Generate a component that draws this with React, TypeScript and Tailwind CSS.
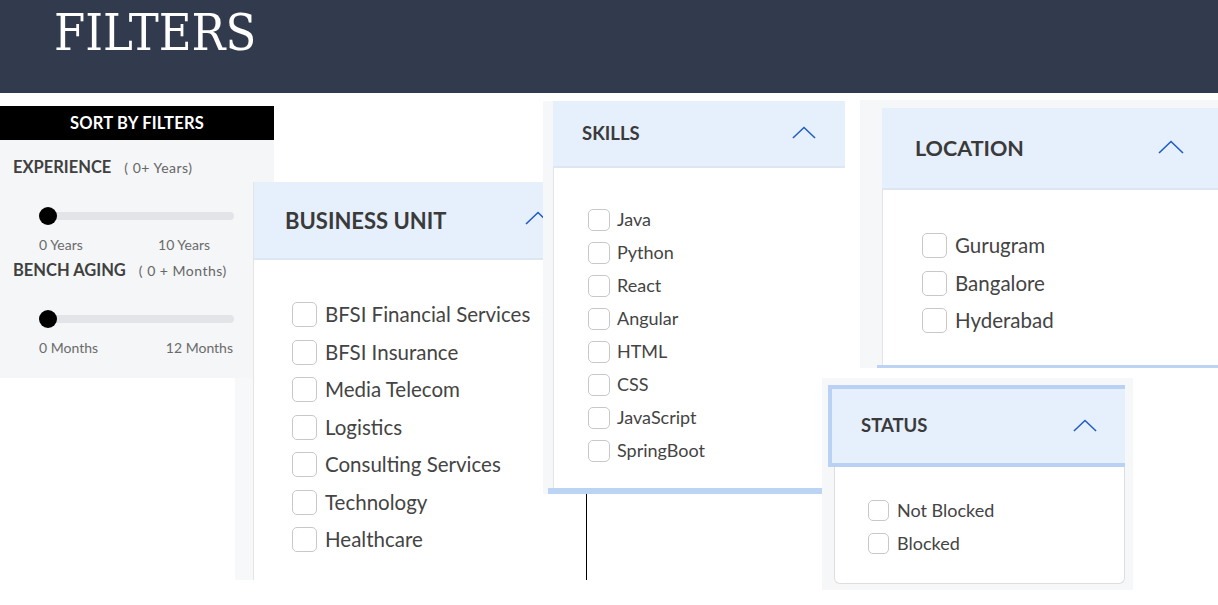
import React from "react";

const font = { fontFamily: "Lato, 'Noto Sans', sans-serif" };

const Chevron = ({ className = "" }: { className?: string }) => (
  <svg viewBox="0 0 26 14" className={className} fill="none">
    <polyline points="1,13 13,1.5 25,13" stroke="#1f5cc4" strokeWidth="1.6" />
  </svg>
);

const Box = ({ size }: { size: string }) => (
  <span className={`${size} shrink-0 rounded-[5px] border border-[#c8c8c8] bg-white`} />
);

interface ListProps {
  items: string[];
  box: string;
  text: string;
  row: string;
  gap: string;
}

const CheckList: React.FC<ListProps> = ({ items, box, text, row, gap }) => (
  <div className="flex flex-col">
    {items.map((it) => (
      <label key={it} className={`flex items-center ${gap} ${row}`}>
        <Box size={box} />
        <span className={`${text} text-[#444444]`}>{it}</span>
      </label>
    ))}
  </div>
);

const Slider = ({ left, right, pr }: { left: string; right: string; pr: string }) => (
  <div className="flex flex-col pl-[39px]">
    <div className="relative h-[18px] mr-[40px] flex items-center">
      <div className="ml-[9px] h-[8px] w-full rounded-full bg-[#e3e4e8]" />
      <div className="absolute left-0 top-0 h-[18px] w-[18px] rounded-full bg-black" />
    </div>
    <div className={`flex justify-between mt-[13px] ${pr} text-[14px] text-[#6b6b6b] leading-none`}>
      <span>{left}</span>
      <span>{right}</span>
    </div>
  </div>
);

export default function App() {
  return (
    <div className="relative w-[1218px] h-[605px] overflow-hidden bg-white" style={font}>
      <div className="h-[93px] bg-[#323a4d] pl-[54px] pt-[6px]">
        <h1
          className="text-[50px] leading-none text-white pt-[2px]"
          style={{ fontFamily: "'DejaVu Serif Condensed', 'DejaVu Serif', serif", fontStretch: "condensed" }}
        >
          FILTERS
        </h1>
      </div>

      {/* sort by filters */}
      <div className="absolute left-0 top-[106px] w-[274px] h-[272px] bg-[#f5f6f8] flex flex-col">
        <div className="h-[34px] bg-black flex items-center justify-center text-white font-bold text-[16.5px] tracking-[0.2px]">
          SORT BY FILTERS
        </div>
        <div className="flex items-baseline gap-[13px] pl-[13px] pt-[19px] leading-none h-[41px] text-[#404040]">
          <span className="font-bold text-[16.5px]">EXPERIENCE</span>
          <span className="text-[14px] text-[#666] tracking-[0.5px]">( 0+ Years)</span>
        </div>
        <div className="mt-[26px]">
          <Slider left="0 Years" right="10 Years" pr="pr-[64px]" />
        </div>
        <div className="flex items-baseline gap-[13px] pl-[13px] pt-[10px] leading-none h-[36px] text-[#404040]">
          <span className="font-bold text-[16.5px]">BENCH AGING</span>
          <span className="text-[14px] text-[#666] tracking-[0.5px]">( 0 + Months)</span>
        </div>
        <div className="mt-[22px]">
          <Slider left="0 Months" right="12 Months" pr="pr-[41px]" />
        </div>
      </div>

      {/* business unit */}
      <div className="absolute left-[235px] top-[378px] w-[20px] h-[202px] bg-[#f7f8fa]" />
      <div className="absolute left-[253px] top-[182px] w-[300px] h-[398px] bg-white border-l border-[#e2e4e8] flex flex-col">
        <div className="h-[78px] shrink-0 bg-[#e6effc] border-b-2 border-[#dde6f2] flex items-center justify-between pl-[31px] pr-[2px]">
          <span className="font-bold text-[22px] text-[#3a3a3a]">BUSINESS UNIT</span>
          <Chevron className="w-[26px] h-[14px] mb-[4px]" />
        </div>
        <div className="pl-[38px] pt-[36px]">
          <CheckList
            items={[
              "BFSI Financial Services",
              "BFSI Insurance",
              "Media Telecom",
              "Logistics",
              "Consulting Services",
              "Technology",
              "Healthcare",
            ]}
            box="w-[25px] h-[25px]"
            text="text-[20.5px]"
            row="h-[37.5px]"
            gap="gap-[8px]"
          />
        </div>
      </div>

      {/* skills */}
      <div className="absolute left-[543px] top-[101px] w-[302px] h-[393px] bg-[#f6f7f9] flex flex-col pl-[10px]">
        <div className="h-[67px] shrink-0 bg-[#e6effc] border-b-2 border-[#dde6f2] flex items-center justify-between pl-[29px] pr-[29px]">
          <span className="font-bold text-[18.5px] text-[#3a3a3a]">SKILLS</span>
          <Chevron className="w-[24px] h-[13px] mb-[2px]" />
        </div>
        <div className="flex-1 bg-white border-l border-[#e2e4e8] pl-[34px] pt-[35px]">
          <CheckList
            items={["Java", "Python", "React", "Angular", "HTML", "CSS", "JavaScript", "SpringBoot"]}
            box="w-[22px] h-[22px]"
            text="text-[18px]"
            row="h-[33px]"
            gap="gap-[7px]"
          />
        </div>
        <div className="h-[6px] -ml-[5px] w-[274px] bg-[#bcd4f4]" />
      </div>
      <div className="absolute left-[586px] top-[494px] w-px h-[86px] bg-black" />

      {/* location */}
      <div className="absolute left-[860px] top-[100px] w-[358px] h-[268px] bg-[#f6f7f9] flex flex-col pl-[22px] pt-[8px]">
        <div className="h-[82px] shrink-0 bg-[#e6effc] border-b-2 border-[#dde6f2] flex items-center justify-between pl-[33px] pr-[34px]">
          <span className="font-bold text-[21.5px] text-[#3a3a3a]">LOCATION</span>
          <Chevron className="w-[26px] h-[14px] mb-[2px]" />
        </div>
        <div className="flex-1 bg-white border-l border-[#e2e4e8] pl-[39px] pt-[37px]">
          <CheckList
            items={["Gurugram", "Bangalore", "Hyderabad"]}
            box="w-[25px] h-[25px]"
            text="text-[20.5px]"
            row="h-[37.5px]"
            gap="gap-[8px]"
          />
        </div>
        <div className="h-[3px] -ml-[5px] bg-[#bcd4f4]" />
      </div>

      {/* status */}
      <div className="absolute left-[822px] top-[378px] w-[311px] h-[212px] bg-[#f6f7f9] flex flex-col pl-[6px] pr-[8px] pt-[7px]">
        <div className="h-[82px] shrink-0 bg-[#e6effc] border-y-[4px] border-l-[4px] border-[#b8d1f4] flex items-center justify-between pl-[29px] pr-[28px]">
          <span className="font-bold text-[18.5px] text-[#3a3a3a]">STATUS</span>
          <Chevron className="w-[24px] h-[13px] mb-[2px]" />
        </div>
        <div className="ml-[6px] h-[117px] bg-white border border-t-0 border-[#dedede] rounded-b-md pl-[33px] pt-[27px]">
          <CheckList
            items={["Not Blocked", "Blocked"]}
            box="w-[21px] h-[21px]"
            text="text-[18px]"
            row="h-[33px]"
            gap="gap-[8px]"
          />
        </div>
      </div>
    </div>
  );
}
